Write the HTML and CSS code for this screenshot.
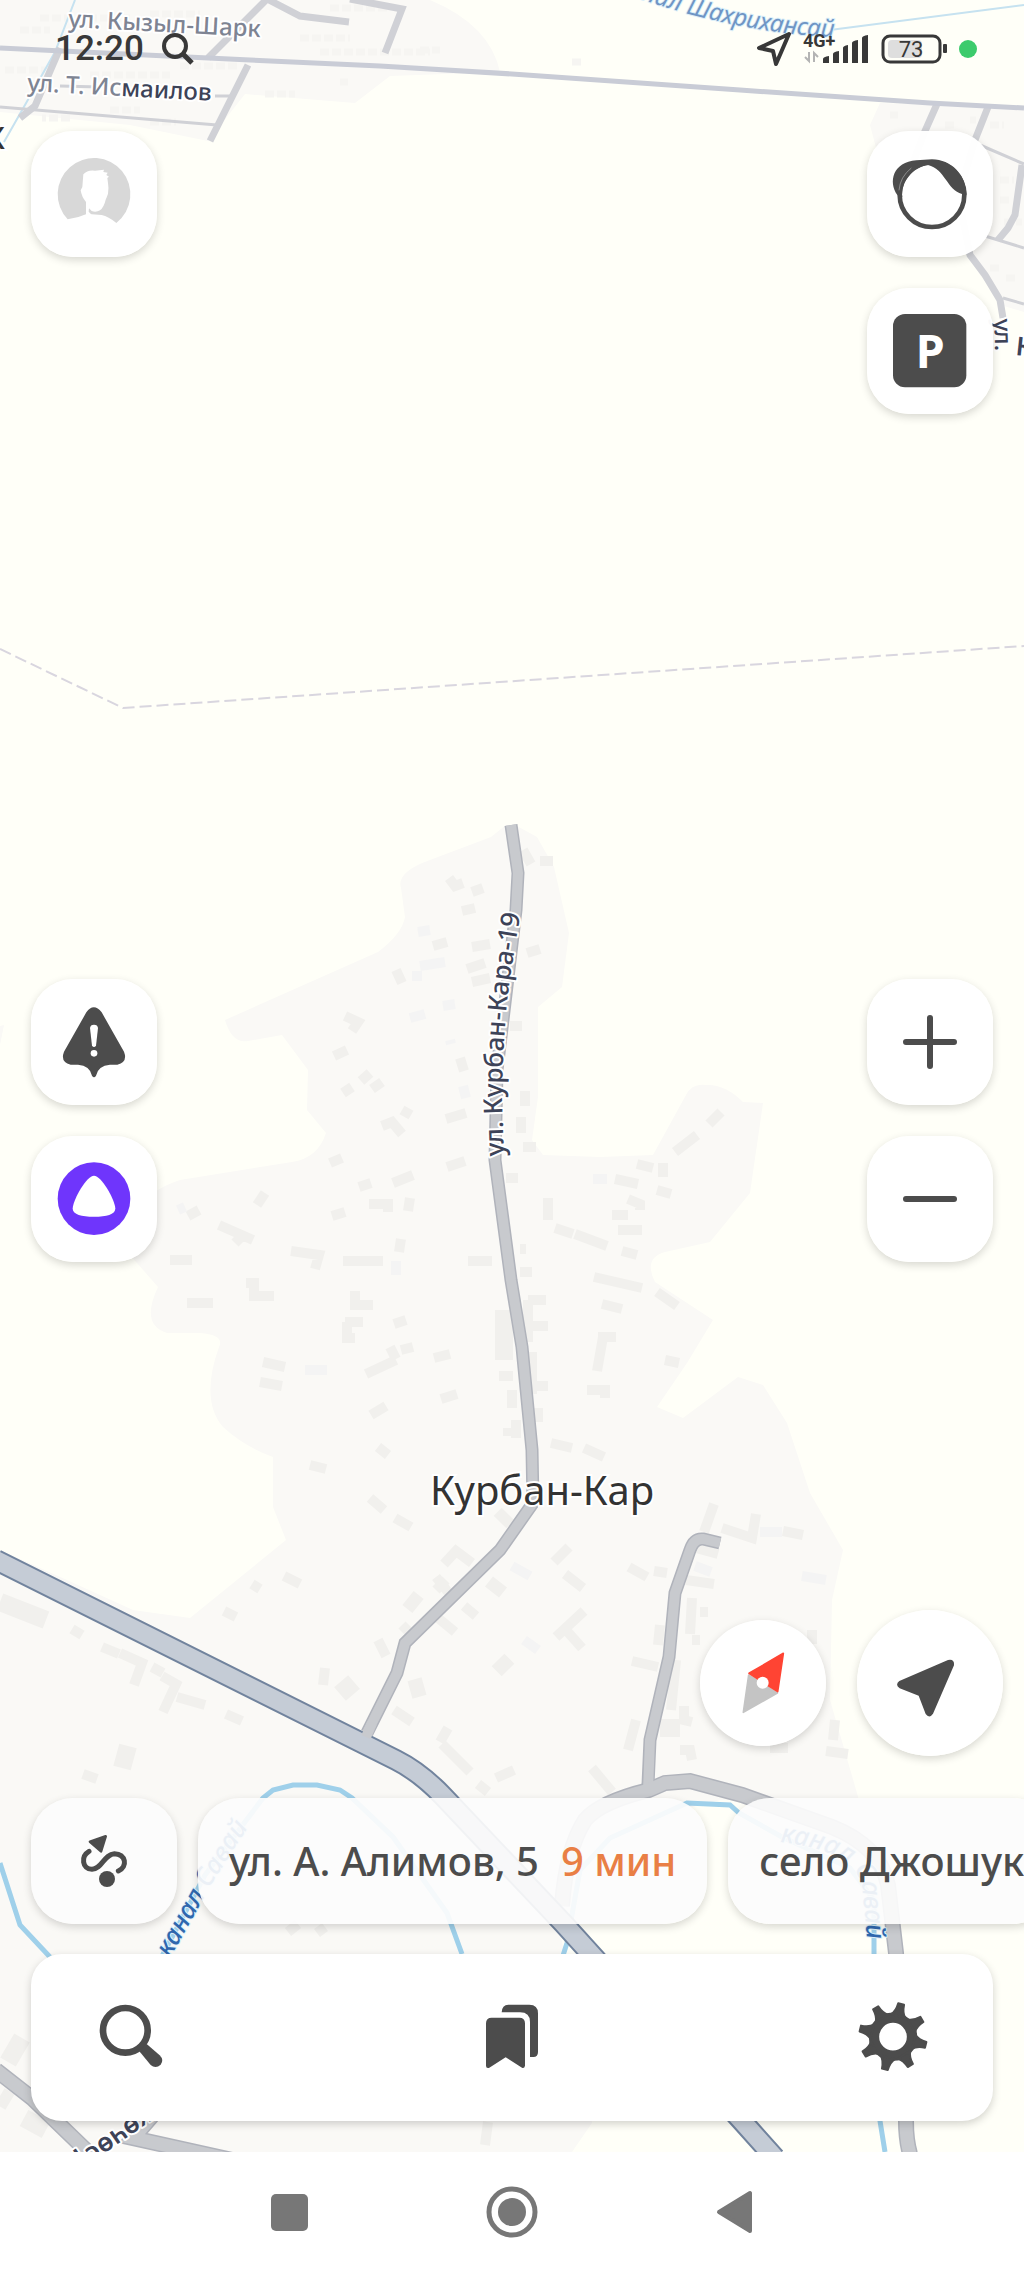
FILE: index.html
```html
<!DOCTYPE html>
<html lang="ru">
<head>
<meta charset="utf-8">
<meta name="viewport" content="width=device-width, initial-scale=1">
<title>Навигатор</title>
<link rel="stylesheet" href="styles.css">
</head>
<body>
<main class="screen">
  <svg class="map" viewBox="0 0 1024 2152" preserveAspectRatio="xMidYMin slice" aria-hidden="true">
    <!-- settlements -->
    <g class="land">
      <path d="M506 825L491 837L430 860Q396 872 401 888L405 917Q402 934 378 952L225 1020Q232 1044 248 1041L282 1035L308 1070L307 1110L326 1133Q318 1158 292 1162L180 1180Q120 1200 130 1255L158 1287Q140 1325 167 1333L200 1333Q225 1335 219 1347Q200 1400 223 1427Q245 1447 273 1457V1507L286 1540L190 1618L133 1610L67 1580L0 1550V2152H572L592 2123L560 1930L600 1830L720 1800H859L830 1700L832 1600L843 1550L810 1493L787 1423L763 1385L738 1377L683 1418L657 1407L687 1363L713 1320L655 1282Q643 1258 665 1252L710 1242L750 1193L763 1103L743 1102Q725 1084 706 1085Q692 1083 686 1095L653 1155L600 1157L543 1155L532 1140L538 1097V1007L562 987L569 933L554 867L537 837L517 826Z"/>
      <path d="M0 0H430Q490 25 500 72L390 76L355 103L245 94L208 141L130 125L0 112Z"/>
      <path d="M880 103L1024 108V312L1004 306L980 275L960 240L890 200L870 125Z"/>
      <path d="M0 1026L4 1025L0 1045Z"/>
    </g>

    <!-- buildings -->
    <g class="houses small">
      <path d="M449 878l6 8l8-3M472 892l11-4M462 911l13-3M433 946l14-4M472 947l18-3M527 953l13-4M467 969l18-6M396 970l6 13M472 982l18-4M523 850l8 14M540 861h13M345 1016l13 6l-6 9M334 1056l13-6M361 1081l9-8M372 1089l10-7M343 1093l9-6M382 1126l10-4l10 12M402 1110l9 5M460 1058l4 13M446 1119l20-6M510 1026h12M525 1091v15M521 1117v16M523 1147h13M506 1178h12M330 1163l12-5M359 1187l12-4M393 1183l20-8M447 1167l18-6M257 1205l8-12M369 1204h19v8M410 1198l-2 13M332 1216l13-4M675 1152l22-17M709 1124l12-12"/>
      <path d="M637 1164l16 4M663 1163v14M615 1179l23 5M657 1190l14 4M628 1199l12 5v6M612 1215h16M618 1230h24M548 1198v22M555 1228l18 6M575 1234l32 12M622 1251l15 4M594 1277l48 11M657 1292l20 14M602 1304l20 5M598 1337h18M603 1337l-6 34M665 1360l14 3M587 1390h18v8M551 1443l21 5M584 1448l20 9M188 1216l11-6M219 1225l34 15M235 1243l8-8M170 1260h22M291 1251l28 4l-4 14M343 1261h40M401 1239l-2 13M187 1303h26M246 1283h8v13h20M355 1291v14h18M345 1322h18M347 1322v16h8M394 1324l12-4M263 1362l22 5M260 1382l22 4M366 1374l30-14M390 1347l6 12M401 1350l12-3M434 1358l16-4M441 1399l16-5M371 1415l15-9M378 1447l10 8M310 1465l16 4M370 1498l14 12M395 1518l16 9M284 1576l16 8M252 1584l8 5"/>
      <path d="M468 1261h24M520 1249h6M520 1272h12M528 1300v42M528 1300h18M532 1326h16M532 1352v42M536 1386h12M508 1428v8M538 1408v14M499 1376h14M512 1390v18M516 1420v18"/>
      <path d="M72 1629l10 6M102 1647l17 7M120 1653l22 10l-8 22M152 1667l11 6M162 1676l14 8l-13 28M177 1697l28 8M226 1714l16 7M83 1774l14 5M224 1611l12 6M325 1668l-2 17M394 1710l18 12M444 1564l12-13l16 12M438 1618l17 14M378 1640l8 16M440 1742l8-14M442 1744l28 28M478 1784l10 8M496 1778l18-8M402 1625l8 8M436 1577l16 20M464 1606l12 10M446 1580l-10 10"/>
      <path d="M554 1562l15-15M565 1574l18 14M629 1567l18 10M654 1571l13 2M714 1504l-10 28M722 1528l30 10l4-24M783 1531l20 4M696 1548l22 6M686 1580l28 4M692 1598l-2 36M700 1612h8M556 1637l28-26M566 1630l16 18M660 1625l-2 20M632 1661l26 6M676 1660l-5 50M684 1706v14l8 2M636 1720l-8 30M692 1640h8M592 1768l20 24M680 1750h10l2 10M835 1720l-2 20M826 1751l22 3M770 1748h18M812 1630v14M288 1932l10-8M318 1926l6 8M488 2122l-3 23"/>
      <path class="pale" d="M178 1210l7-3M305 1370h22M593 1179h14M396 1261v14M760 1532h22M802 1576l24 4M512 1566l18 10M524 1640l14 10M695 1566l16 6M450 1040l1 4M463 1086l3 12M445 962l-25 4M430 930l-12 2M455 1004l-12 2M422 976h-10M425 1014l-15 4"/>
    </g>
    <g class="houses wide">
      <path d="M504 1310v50M0 1602l46 18M128 1746l-6 22M340 1694l14-12M410 1690l14-4M408 1598l10 8M498 1660l10 10M660 1728h20M8 2062l14-24M24 2118l22 12M0 2096l10 6M500 1522l8-8M492 1592l8-10"/>
    </g>
    <g class="houses hatch">
      <path d="M90 75h80M180 66h60M40 18h90M150 14h50M300 38h50M320 52h110M330 8h60M420 50h20M110 110h30M70 118h-28M265 94h30M150 122h26M340 82h8M5 70h40M20 30h30M890 115h8M945 125h12M970 120h6M990 125h14M1000 180h14M1000 200h12M1004 222h18M990 268h10M1006 278h12M572 62h10"/>
    </g>

    <!-- district boundary -->
    <path class="boundary" d="M0 649L123 708L1024 646"/>

    <!-- canals -->
    <g class="water">
      <path d="M0 1863L20 1925L50 1957"/>
      <path d="M160 1960L205 1875L263 1798L273 1790L293 1785H317L340 1790L352 1798L393 1837L447 1913L462 1954"/>
      <path d="M560 1965L567 1943L580 1870L610 1838L687 1803L730 1805L739 1813L782 1837L850 1868L874 1900V1953L880 2121L885 2152"/>
      <path class="brook" d="M75 0L55 52L4 142M830 30L1024 5"/>
    </g>

    <!-- streets -->
    <g class="lane">
      <path d="M208 58L267 -1L300 16L349 22M350 -1L402 9L385 53M60 48L35 106L20 118M248 65L210 141"/>
      <path class="thin" d="M0 107L217 125M215 96H233M60 86L100 87M980 145L1024 164M985 236L1024 248M1003 298L1024 304"/>
      <path d="M937 104L925 131L912 165M988 107L975 140L960 190M1022 165L1015 215L1008 228L998 240M962 215L970 255L985 275L1000 300L1003 318"/>
      <path class="highway" d="M0 48L250 60L380 66L512 74L740 90L930 103L1024 108"/>
    </g>
    <g class="street-edge">
      <path d="M511 825L518 873L516 910L497 1070L495 1160L511 1280L522 1347L532 1450L533 1503L500 1550L405 1643L397 1673L367 1733"/>
      <path d="M720 1543L703 1539Q694 1538 690 1550L675 1593L669 1657L650 1740L648 1785"/>
      <path class="broad" d="M562 1906Q566 1850 585 1820Q600 1802 649 1790L665 1783L690 1781L742 1795L832 1827Q880 1846 888 1885L896 1953L906 2121Q906 2140 910 2154"/>
      <path class="broad" d="M-4 2070L33 2099L92 2156M152 2116L133 2138L250 2164"/>
    </g>
    <g class="street">
      <path d="M511 825L518 873L516 910L497 1070L495 1160L511 1280L522 1347L532 1450L533 1503L500 1550L405 1643L397 1673L365 1737"/>
      <path d="M720 1543L703 1539Q694 1538 690 1550L675 1593L669 1657L650 1740L648 1790"/>
      <path class="broad" d="M562 1906Q566 1850 585 1820Q600 1802 649 1790L665 1783L690 1781L742 1795L832 1827Q880 1846 888 1885L896 1953L906 2121Q906 2140 910 2154"/>
      <path class="broad" d="M-4 2070L33 2099L92 2156M152 2116L133 2138L250 2164"/>
    </g>
    <path class="road-edge" d="M-4 1560L362 1743L396 1760Q420 1772 443 1796L563 1923L742 2121L775 2158"/>
    <path class="road" d="M-4 1560L362 1743L396 1760Q420 1772 443 1796L563 1923L742 2121L775 2158"/>
    <path class="street-join" d="M372 1723L366 1737"/>

    <!-- labels -->
    <defs>
      <path id="kurban" d="M504 1156L502 1100Q503 1020 512 966L524 890"/>
      <path id="shakh" d="M600 -16Q720 32 834 37"/>
      <path id="savai-left" d="M170 1958L214 1880L272 1790"/>
      <path id="savai-right" d="M780 1842Q852 1850 862 1885L872 1990"/>
    </defs>
    <g class="label">
      <text class="muted" x="68" y="27" transform="rotate(3 68 27)">ул. Кызыл-Шарк</text>
      <text x="27" y="91" transform="rotate(3 27 91)"><tspan class="muted">ул. Т. Ис</tspan>маилов</text>
      <text class="big"><textPath href="#kurban">ул. Курбан-Кара-19</textPath></text>
      <text x="994" y="319" transform="rotate(88 994 319)">ул.</text>
      <text class="strong" x="1015" y="355" transform="rotate(6 1015 355)">К</text>
      <text class="strong" x="146" y="2107" transform="rotate(145 146 2107)">көчөсү</text>
    </g>
    <g class="label canal">
      <text class="faded" text-anchor="end"><textPath href="#shakh" startOffset="100%">канал Шахрихансай</textPath></text>
      <text class="big"><textPath href="#savai-left">канал Савай</textPath></text>
      <text class="big"><textPath href="#savai-right">канал Савай</textPath></text>
    </g>
    <text class="village" x="430" y="1505">Курбан-Кар</text>
    <text class="village" x="5" y="149" text-anchor="end">к</text>
  </svg>

  <header class="status">
    <div class="status-group">
      <time>12:20</time>
      <svg width="32" height="32" viewBox="0 0 32 32"><circle cx="13" cy="13" r="11" fill="none" stroke="#383838" stroke-width="4"/><path d="M20 20l10 10" stroke="#383838" stroke-width="5"/></svg>
    </div>
    <div class="status-group end">
      <svg width="36" height="36" viewBox="0 0 36 36"><path d="M34 3L4 17l14 3l3 13z" fill="none" stroke="#383838" stroke-width="4" stroke-linejoin="round"/></svg>
      <svg width="66" height="32" viewBox="0 0 66 32">
        <text class="net" x="0" y="14">4G+</text>
        <path d="M6 19v9l-4-4M11 29v-9l4 4" fill="none" stroke="#b4b4b4" stroke-width="2"/>
        <path d="M20 30v-4q0-2 6-3v7zM30 30v-9q0-2 6-3v12zM40 30V15q0-2 5-3v18zM49 30v-20q0-2 6-3v23zM59 30V5q0-2 6-3v28z" fill="#383838"/>
      </svg>
      <svg width="66" height="30" viewBox="0 0 66 30">
        <rect x="7" y="6" width="34" height="18" rx="4" fill="#dedede"/>
        <rect x="2" y="2" width="57" height="26" rx="7" fill="none" stroke="#383838" stroke-width="3"/>
        <rect x="62" y="10" width="4" height="9" rx="1" fill="#383838"/>
        <text class="charge" x="30" y="23" text-anchor="middle">73</text>
      </svg>
      <svg width="18" height="18" viewBox="0 0 18 18"><circle cx="9" cy="9" r="9" fill="#3ccb6c"/></svg>
    </div>
  </header>

  <div class="row top">
    <button class="tile" aria-label="Профиль">
      <svg viewBox="93 392 378 378"><path fill="#d8d8d8" d="M203 657A109 109 0 1 1 349 668Q325 648 305 644L275 642L262 640Q235 652 203 657Z"/><path fill="#fff" d="M250 522Q262 508 285 511L312 508L310 515L323 517L319 524L327 529L322 533L324 548Q327 565 324 580Q320 592 317 598Q312 620 300 630Q288 637 275 632L267 624L266 634L275 643L258 645V605Q245 590 242 570L247 560Z"/></svg>
    </button>
    <div class="stack">
      <button class="tile" aria-label="Слои карты">
        <svg viewBox="1067 392 378 378"><circle cx="1262" cy="583" r="97" fill="none" stroke="#4c4c4c" stroke-width="14"/><path fill="#4c4c4c" d="M1158 584C1130 545 1145 485 1215 480L1262 477C1320 479 1362 520 1366 583L1352 581C1308 570 1300 505 1250 494C1205 500 1168 545 1173 590Z"/><path d="M1163 570Q1166 530 1200 503" fill="none" stroke="#aaa" stroke-width="2"/></svg>
      </button>
      <button class="tile" aria-label="Парковки">
        <svg viewBox="1067 864 378 378"><rect x="1145" y="942" width="220" height="220" rx="36" fill="#4c4c4c"/><text class="parking" x="1257" y="1103" text-anchor="middle">P</text></svg>
      </button>
    </div>
  </div>

  <div class="row middle">
    <div class="stack">
      <button class="tile" aria-label="Сообщить о событии">
        <svg viewBox="93 62 378 378"><path fill="#4c4c4c" d="M259 162Q281 132 305 162L372 280Q384 312 352 319H330Q294 322 288 352Q282 362 276 352Q270 322 234 319H212Q180 312 192 280Z"/><path fill="#fff" d="M270 209Q271 199 282 199T294 209L288 262Q282 270 276 262Z"/><circle cx="282" cy="285" r="10" fill="#fff"/></svg>
      </button>
      <button class="tile" aria-label="Алиса">
        <svg viewBox="93 530 378 378"><circle cx="282" cy="718" r="109" fill="#6f35fc"/><path fill="#fff" d="M282 649C304 649 345 720 346 748C345 765 320 772 282 772S219 765 218 748C219 720 260 649 282 649Z"/></svg>
      </button>
    </div>
    <div class="stack">
      <button class="tile" aria-label="Приблизить">
        <svg viewBox="0 0 126 126"><path d="M39 63h48M63 39v48" stroke="#4c4c4c" stroke-width="6" stroke-linecap="round"/></svg>
      </button>
      <button class="tile" aria-label="Отдалить">
        <svg viewBox="0 0 126 126"><path d="M39 63h48" stroke="#4c4c4c" stroke-width="6" stroke-linecap="round"/></svg>
      </button>
    </div>
  </div>

  <div class="row position">
    <button class="tile round" aria-label="Компас">
      <svg viewBox="565 361 378 378"><g stroke-width="5" stroke-linejoin="round"><path fill="#c4c4c4" stroke="#c4c4c4" d="M711 526L797 580L695 638Z"/><path fill="#ff4433" stroke="#ff4433" d="M815 461L798 576L712 521Z"/></g><circle cx="753" cy="549" r="18" fill="#fff"/></svg>
    </button>
    <button class="tile round large" aria-label="Моё местоположение">
      <svg viewBox="1035 330 438 438"><path fill="#4c4c4c" d="M1162 543L1308 480Q1328 476 1326 496L1263 641Q1252 657 1241 642L1220 587L1163 565Q1148 554 1162 543Z"/></svg>
    </button>
  </div>

  <div class="row suggestions">
    <button class="chip route" aria-label="Маршруты">
      <svg viewBox="93 893 438 378"><path fill="#4c4c4c" stroke="#4c4c4c" stroke-width="8" stroke-linejoin="round" d="M270 1024L317 1008L303 1053Z"/><circle cx="321" cy="1136" r="24" fill="#4c4c4c"/><path d="M267 1053C242 1068 246 1106 276 1107C306 1106 312 1062 343 1060C378 1062 384 1098 355 1112" fill="none" stroke="#4c4c4c" stroke-width="15" stroke-linecap="round"/></svg>
    </button>
    <button class="chip"><span>ул. А. Алимов, 5</span><span class="eta">9 мин</span></button>
    <button class="chip"><span>село Джошук</span></button>
  </div>

  <nav class="panel" aria-label="Меню">
    <button aria-label="Поиск">
      <svg viewBox="204 228 378 378"><circle cx="376" cy="397" r="67" fill="none" stroke="#4c4c4c" stroke-width="20"/><path fill="#4c4c4c" d="M418 460L440 438L479 472Q493 486 482 500Q467 514 452 501Z"/></svg>
    </button>
    <button aria-label="Закладки">
      <svg viewBox="1347 228 378 378"><path fill="#4c4c4c" d="M1475 359H1558Q1575 359 1575 376V503Q1573 512 1566 509L1517 478L1468 509Q1458 512 1458 503V376Q1458 359 1475 359ZM1505 343Q1506 320 1525 320H1588Q1614 320 1614 346V462Q1614 477 1600 477H1590V372Q1590 343 1560 343Z"/></svg>
    </button>
    <button aria-label="Настройки">
      <svg viewBox="957 228 378 378"><g fill="none" stroke="#4c4c4c"><circle cx="1146" cy="416" r="57" stroke-width="31"/><g transform="rotate(14 1146 416)" fill="#4c4c4c" stroke-width="6" stroke-linejoin="round"><path id="tooth" d="M1124 352Q1136 340 1137 315H1155Q1156 340 1168 352Z"/><use href="#tooth" transform="rotate(45 1146 416)"/><use href="#tooth" transform="rotate(90 1146 416)"/><use href="#tooth" transform="rotate(135 1146 416)"/><use href="#tooth" transform="rotate(180 1146 416)"/><use href="#tooth" transform="rotate(225 1146 416)"/><use href="#tooth" transform="rotate(270 1146 416)"/><use href="#tooth" transform="rotate(315 1146 416)"/></g></g></svg>
    </button>
  </nav>
</main>

<footer class="system">
  <button aria-label="Недавние"><svg width="52" height="52" viewBox="0 0 52 52"><rect x="8" y="8" width="37" height="37" rx="5" fill="#777"/></svg></button>
  <button aria-label="Домой"><svg width="52" height="52" viewBox="0 0 52 52"><circle cx="26" cy="26" r="23" fill="none" stroke="#777" stroke-width="5"/><circle cx="26" cy="26" r="14" fill="#777"/></svg></button>
  <button aria-label="Назад"><svg width="52" height="52" viewBox="0 0 52 52"><path d="M10 26L41 7V45Z" fill="#777" stroke="#777" stroke-width="4" stroke-linejoin="round"/></svg></button>
</footer>
</body>
</html>
```
FILE: styles.css
```css
* {
  box-sizing: border-box;
}

body {
  margin: 0;
  min-height: 100vh;
  display: flex;
  flex-direction: column;
  background: #fff;
  color: #4c4c4c;
  font-family: "Noto Sans", "Open Sans", sans-serif;
}

button {
  margin: 0;
  padding: 0;
  border: 0;
  background: none;
  color: inherit;
  font: inherit;
  cursor: pointer;
}

button svg {
  display: block;
}

.screen {
  position: relative;
  flex: 1;
  display: grid;
  grid-template-columns: minmax(0, 1fr);
  grid-template-rows:
    [status] 100px
    [top] auto
    13fr
    [middle] auto
    8fr
    [position] auto
    [suggestions] auto
    [panel] auto;
  padding-bottom: 31px;
  overflow: hidden;
  background: #fffff8;
}

.screen > :not(.map) {
  position: relative;
}

/* Map */
.map {
  position: absolute;
  inset: 0;
  width: 100%;
  height: 100%;
}

.land { fill: #faf9f6; }

.houses {
  fill: none;
  stroke: #f1f0ed;
  stroke-width: 10;
}
.houses.wide { stroke-width: 18; }
.houses.hatch {
  stroke: #f6f5f2;
  stroke-width: 7;
  stroke-dasharray: 9 3;
}
.houses .pale { stroke: #f4f4f4; }

.boundary {
  fill: none;
  stroke: #d9d6df;
  stroke-width: 2;
  stroke-dasharray: 12 5;
}

.water {
  fill: none;
  stroke: #9fd0ea;
  stroke-width: 5;
}
.water .brook {
  stroke: #c6e2f0;
  stroke-width: 2;
}

.lane {
  fill: none;
  stroke: #d0d1d6;
  stroke-width: 7;
}
.lane .thin { stroke-width: 3; }
.lane .highway {
  stroke: #c9ccd6;
  stroke-width: 5;
}

.street-edge {
  fill: none;
  stroke: #b0b3bb;
  stroke-width: 13;
}
.street {
  fill: none;
  stroke: #c8cace;
  stroke-width: 10;
}
.street-edge .broad { stroke-width: 16; }
.street .broad { stroke-width: 13; }

.road-edge {
  fill: none;
  stroke: #71839d;
  stroke-width: 22;
}
.road {
  fill: none;
  stroke: #c5ccd6;
  stroke-width: 18;
}
.street-join {
  stroke: #c8cace;
  stroke-width: 10;
}

.label {
  fill: #3d4358;
  stroke: #fff;
  stroke-width: 4;
  stroke-linejoin: round;
  paint-order: stroke;
  font-size: 24px;
  font-weight: 500;
}
.label .big { font-size: 26px; }
.label .strong {
  font-size: 26px;
  font-weight: 600;
}
.label .muted { fill: #7e8493; }
.label.canal {
  fill: #2f67ad;
  stroke: #dcf0fa;
  stroke-width: 2;
  font-style: italic;
}
.label .faded {
  fill: #6f95c4;
  font-weight: 400;
}

.village {
  fill: #333;
  stroke: #fff;
  stroke-width: 4;
  paint-order: stroke;
  font-size: 40px;
}

/* Status bar */
.status,
.status-group {
  display: flex;
  align-items: center;
}
.status {
  grid-row: status;
  justify-content: space-between;
  padding: 0 47px 3px 55px;
  color: #383838;
  font-family: Roboto, sans-serif;
  font-size: 35px;
  font-weight: 500;
}
.status-group { gap: 18px; }
.status-group.end { gap: 12px; }
.net {
  fill: #383838;
  font-size: 18px;
  font-weight: 700;
}
.charge {
  fill: #383838;
  font-size: 22px;
  font-weight: 400;
}

/* Floating controls */
.row {
  display: flex;
  justify-content: space-between;
  padding: 0 31px;
}
.top {
  grid-row: top;
  padding-top: 31px;
}
.middle { grid-row: middle; }

.stack {
  display: flex;
  flex-direction: column;
  gap: 31px;
}

.tile,
.chip {
  flex: none;
  height: 126px;
  border-radius: 42px;
  box-shadow: 0 3px 8px rgba(0, 0, 0, 0.16);
}
.tile {
  width: 126px;
  background: rgba(255, 255, 255, 0.97);
}
.tile.round { border-radius: 50%; }
.tile.large {
  width: 146px;
  height: 146px;
}
.parking {
  fill: #fff;
  font-size: 140px;
  font-weight: 700;
}

.position {
  grid-row: position;
  align-items: center;
  justify-content: flex-end;
  gap: 31px;
  padding: 0 21px;
}

.suggestions {
  grid-row: suggestions;
  justify-content: flex-start;
  gap: 21px;
  padding-top: 42px;
}
.chip {
  display: flex;
  align-items: center;
  gap: 22px;
  padding: 0 31px;
  background: rgba(252, 252, 252, 0.92);
  font-size: 40px;
  font-weight: 500;
  white-space: nowrap;
}
.chip.route {
  width: 146px;
  padding: 0;
}
.chip.route svg { width: 100%; }
.eta { color: #e97f45; }

.panel {
  grid-row: panel;
  display: flex;
  align-items: center;
  justify-content: space-between;
  height: 167px;
  margin: 30px 31px 0;
  padding: 0 37px;
  border-radius: 31px;
  background: #fff;
  box-shadow: 0 3px 8px rgba(0, 0, 0, 0.18);
}
.panel button { width: 126px; }

/* System navigation */
.system {
  display: flex;
  align-items: center;
  justify-content: center;
  height: 124px;
  padding-bottom: 4px;
}
.system button {
  display: flex;
  justify-content: center;
  width: 223px;
}
```
